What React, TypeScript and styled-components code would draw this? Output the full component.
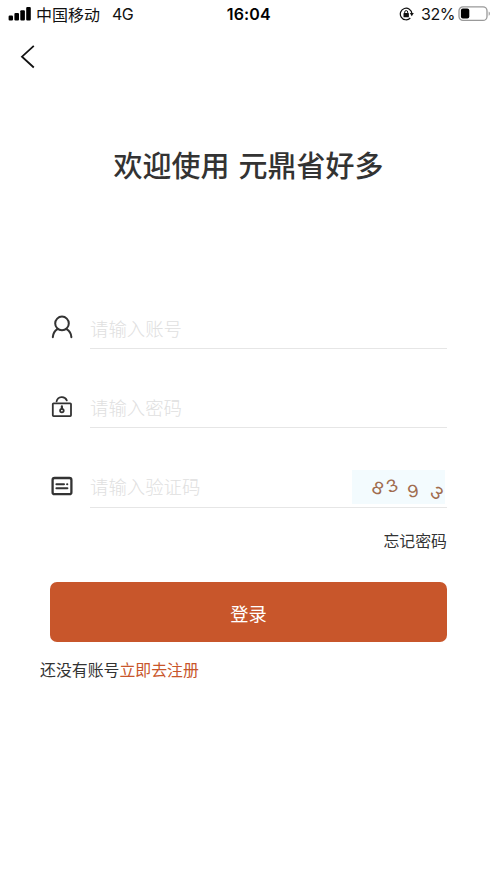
import React from "react";
import styled, { createGlobalStyle } from "styled-components";

const GlobalStyle = createGlobalStyle`
  * { box-sizing: border-box; }
  body {
    margin: 0;
    background: #fff;
    color: #333;
    font-family: "Noto Sans CJK SC", sans-serif;
  }
  svg { flex: none; }
`;

const Screen = styled.main`
  width: 497px;
  height: 883px;
  overflow: hidden;
  background: #fff;
`;

const StatusBar = styled.header`
  display: grid;
  grid-template-columns: 1fr auto 1fr;
  align-items: center;
  height: 28px;
  padding: 0 6.5px 0 8px;
  color: #111;
  line-height: 28px;
`;

const StatusGroup = styled.div<{ $end?: boolean }>`
  display: flex;
  align-items: center;
  height: 28px;
  justify-content: ${(p) => (p.$end ? "flex-end" : "flex-start")};
`;

const Carrier = styled.span`
  margin-left: 4px;
  font-size: 16px;
  line-height: 28px;
`;

const Network = styled.span`
  margin-left: 12px;
  font: 400 16px/28px Inter, sans-serif;
  letter-spacing: -0.7px;
`;

const Clock = styled.time`
  font: 600 16px/28px Inter, sans-serif;
  letter-spacing: 0.15px;
  margin-right: 1px;
  color: #000;
`;

const Percent = styled.span`
  margin: 0 2.5px 0 7px;
  font: 400 16px/28px Inter, sans-serif;
  letter-spacing: -0.45px;
`;

const NavBar = styled.nav`
  display: flex;
  align-items: center;
  height: 57px;
  padding-left: 20px;
`;

const IconButton = styled.button`
  display: flex;
  padding: 0;
  border: 0;
  background: none;
`;

const Title = styled.h1`
  margin: 58px 0 0;
  font-size: 29px;
  font-weight: 500;
  line-height: 42px;
  text-align: center;
  word-spacing: 2.5px;
`;

const Form = styled.form`
  padding: 124px 50px 0;
`;

const Field = styled.label`
  display: grid;
  grid-template-columns: 40px 1fr;
  height: 40px;
  margin-bottom: 39.4px;
`;

const FieldIcon = styled.span`
  display: flex;
  align-items: center;
  height: 36px;
`;

const FieldBody = styled.span`
  display: flex;
  min-width: 0;
  height: 40px;
  border-bottom: 1px solid #e6e6e6;
`;

const Input = styled.input<{ $height: number }>`
  flex: 1;
  min-width: 0;
  height: ${(p) => p.$height}px;
  padding: 0;
  border: 0;
  outline: 0;
  background: none;
  font: 400 18.4px "Noto Sans CJK SC", sans-serif;
  line-height: ${(p) => p.$height}px;
  &::placeholder { color: #e0e0e0; opacity: 1; font-weight: 300; }
`;

const Captcha = styled.span`
  position: relative;
  width: 93px;
  height: 34px;
  margin: 2px 2px 0 0;
  background: #f3fbfe;
`;

const Digit = styled.span<{ $x: number; $y: number; $turn: number }>`
  position: absolute;
  left: ${(p) => p.$x - 6}px;
  top: ${(p) => p.$y - 9}px;
  width: 12px;
  height: 18px;
  font: 400 17px/18px Inter, sans-serif;
  text-align: center;
  color: #a06c4e;
  transform: rotate(${(p) => p.$turn}deg) scaleX(1.08);
`;

const Forgot = styled.div`
  margin-top: -18px;
  font-size: 15.9px;
  line-height: 24px;
  text-align: right;
`;

const Submit = styled.button`
  display: block;
  width: 397px;
  height: 60px;
  margin-top: 29px;
  padding: 2px 0 0;
  border: 0;
  border-radius: 7px;
  background: #c8562b;
  color: #fff;
  font: 400 18.3px/58px "Noto Sans CJK SC", sans-serif;
`;

const Register = styled.p`
  margin: 15.4px 0 0 40px;
  font-size: 15.9px;
  line-height: 24px;
`;

const RegisterLink = styled.span`
  color: #c8562b;
`;

const SignalIcon = () => (
  <svg width="24" height="16" viewBox="0 0 24 16" fill="#000">
    <rect x="0.6" y="9.6" width="4.4" height="5" rx="1.1" />
    <rect x="6.4" y="7" width="4.6" height="7.6" rx="1.1" />
    <rect x="12.3" y="4.2" width="4.6" height="10.4" rx="1.1" />
    <rect x="18.2" y="1" width="4.6" height="13.6" rx="1.1" />
  </svg>
);

const RotationLockIcon = () => (
  <svg width="15" height="14" viewBox="0 0 15 14" fill="none" stroke="#111">
    <path d="M11.3 11A5.8 5.8 0 1 1 12.9 6.6" strokeWidth="1.2" />
    <path d="M10.8 6.1h4l-2 3.1z" fill="#111" stroke="none" />
    <rect x="4.5" y="6.1" width="5.4" height="4.2" rx="0.6" fill="#111" stroke="none" />
    <path d="M5.7 6.3V5.1a1.5 1.5 0 0 1 3 0v1.2" strokeWidth="1" />
  </svg>
);

const BatteryIcon = () => (
  <svg width="33" height="16" viewBox="0 0 33 16">
    <rect x="1" y="0.8" width="28" height="13.6" rx="4" fill="none" stroke="#999" strokeWidth="1.3" />
    <rect x="2.9" y="2.6" width="8.4" height="10" rx="2" fill="#000" />
    <path d="M30.7 5.4c1.6.7 1.6 3.6 0 4.3z" fill="#999" />
  </svg>
);

const BackIcon = () => (
  <svg width="16" height="24" viewBox="0 0 16 24" fill="none" stroke="#111" strokeWidth="1.8">
    <path d="M13.8 .9 2 11.7l11.8 10.8" />
  </svg>
);

const UserIcon = () => (
  <svg width="24" height="24" viewBox="0 0 24 24" fill="none" stroke="#333" strokeWidth="2" strokeLinecap="round">
    <circle cx="12" cy="8.4" r="6.8" />
    <path d="M2.8 22.2c.3-3.6 2-6.4 4.7-8M21.4 22.2c-.3-3.6-2-6.4-4.9-8" />
  </svg>
);

const LockIcon = () => (
  <svg width="24" height="24" viewBox="0 0 24 24" fill="none" stroke="#333" strokeWidth="1.8" strokeLinecap="round">
    <rect x="2.8" y="9.3" width="18.2" height="12.8" rx="0.8" />
    <path d="M6.6 7.4a5.4 5.4 0 0 1 10.2-1" />
    <path d="M11.9 12.4v2" strokeWidth="2.2" />
    <circle cx="11.9" cy="16.6" r="1.8" strokeWidth="1.8" />
  </svg>
);

const CodeIcon = () => (
  <svg width="24" height="24" viewBox="0 0 24 24" fill="none" stroke="#333" strokeWidth="2.3" strokeLinecap="round">
    <rect x="2.6" y="4" width="18.8" height="16.2" rx="2" />
    <path d="M6.4 10.2h7.6M17.1 10.2h.2M6.4 14.2h11" strokeWidth="2" />
  </svg>
);

const fields = [
  { name: "account", hint: "请输入账号", icon: <UserIcon />, inputHeight: 38 },
  { name: "password", hint: "请输入密码", icon: <LockIcon />, inputHeight: 38 },
  { name: "code", hint: "请输入验证码", icon: <CodeIcon />, inputHeight: 37, captcha: true },
];

const digits = [
  { value: 8, x: 26.3, y: 17.9, turn: 24 },
  { value: 3, x: 40.3, y: 16, turn: -20 },
  { value: 9, x: 61, y: 21, turn: -10 },
  { value: 3, x: 85, y: 23.6, turn: 39 },
];

export default function App() {
  return (
    <>
      <GlobalStyle />
      <Screen>
        <StatusBar>
          <StatusGroup>
            <SignalIcon />
            <Carrier>中国移动</Carrier>
            <Network>4G</Network>
          </StatusGroup>
          <Clock>16:04</Clock>
          <StatusGroup $end>
            <RotationLockIcon />
            <Percent>32%</Percent>
            <BatteryIcon />
          </StatusGroup>
        </StatusBar>
        <NavBar>
          <IconButton aria-label="返回"><BackIcon /></IconButton>
        </NavBar>
        <Title>欢迎使用 元鼎省好多</Title>
        <Form onSubmit={(e) => e.preventDefault()}>
          {fields.map((f) => (
            <Field key={f.name}>
              <FieldIcon>{f.icon}</FieldIcon>
              <FieldBody>
                <Input
                  name={f.name}
                  placeholder={f.hint}
                  type={f.name === "password" ? "password" : "text"}
                  $height={f.inputHeight}
                />
                {f.captcha && (
                  <Captcha>
                    {digits.map((d, i) => (
                      <Digit key={i} $x={d.x} $y={d.y} $turn={d.turn}>{d.value}</Digit>
                    ))}
                  </Captcha>
                )}
              </FieldBody>
            </Field>
          ))}
          <Forgot>忘记密码</Forgot>
          <Submit>登录</Submit>
        </Form>
        <Register>
          还没有账号<RegisterLink>立即去注册</RegisterLink>
        </Register>
      </Screen>
    </>
  );
}
